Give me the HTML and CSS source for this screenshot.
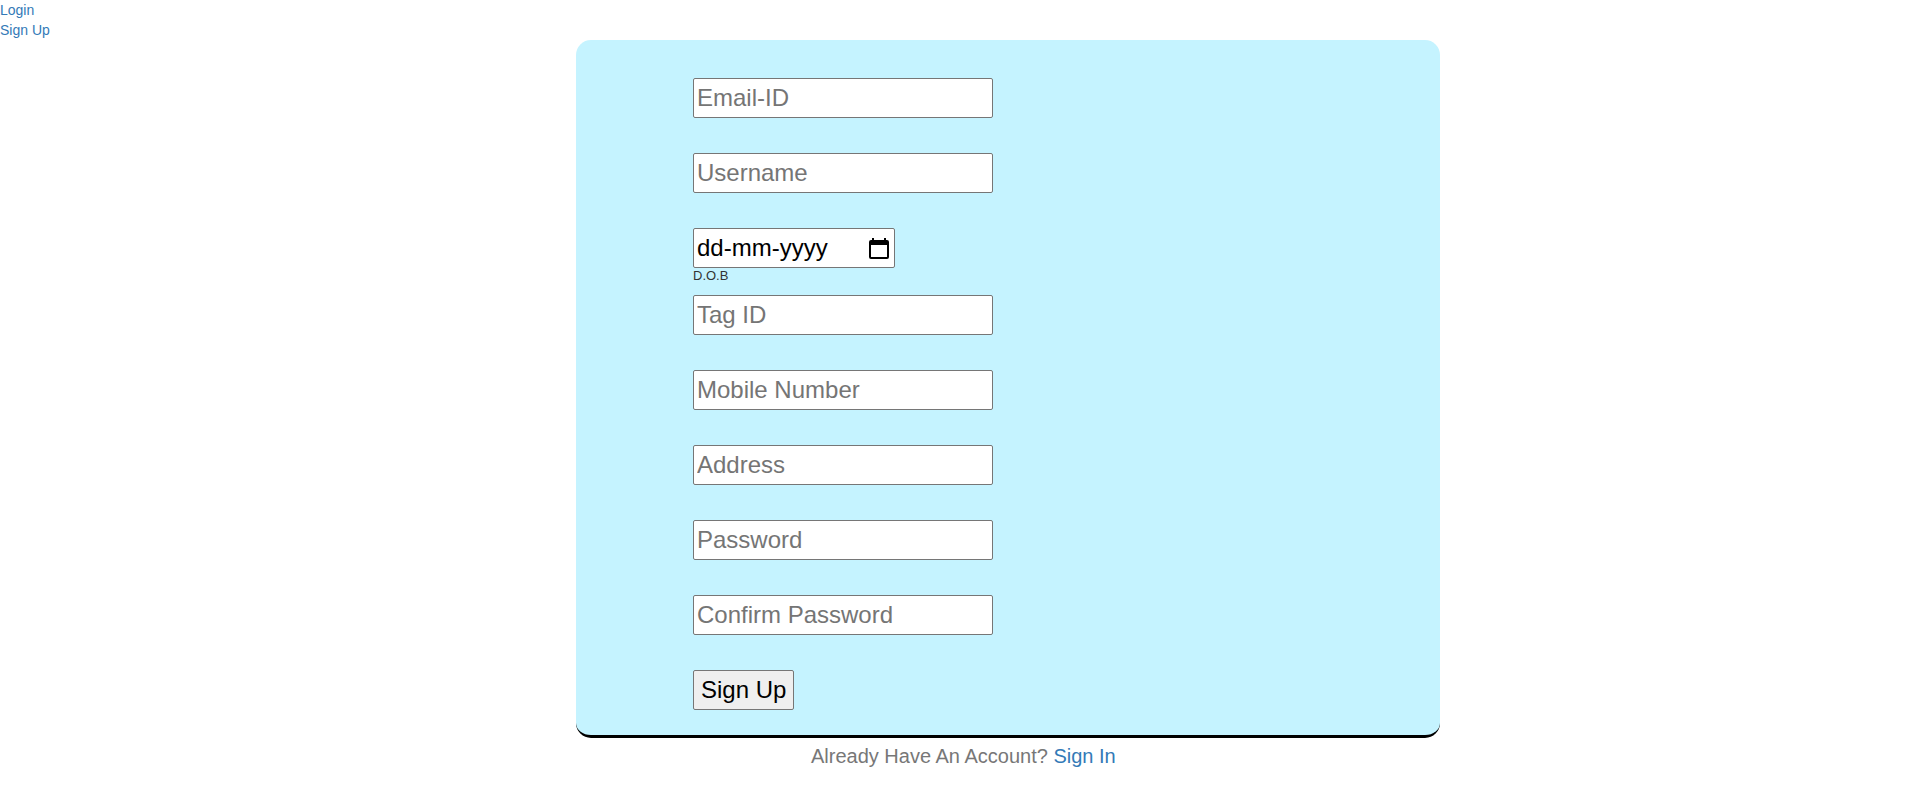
FILE: index.html
```html
<!DOCTYPE html>
<html lang="en">
<head>
<meta charset="utf-8">
<title>Sign Up</title>
<link rel="stylesheet" href="styles.css">
</head>
<body>
<nav class="nav">
  <a href="#login">Login</a>
  <a href="#signup">Sign Up</a>
</nav>
<main class="page">
  <form class="card">
    <input class="field" type="email" placeholder="Email-ID" aria-label="Email-ID">
    <input class="field" type="text" placeholder="Username" aria-label="Username">
    <div class="dob">
      <div class="date">
        <input class="date-text" id="dob" type="text" value="dd-mm-yyyy">
        <button class="date-button" type="button" aria-label="Choose date">
          <svg width="20" height="21" viewBox="0 0 20 21"><path fill="#000" fill-rule="evenodd" d="M3 0h2v2h10V0h2v2h1q2 0 2 2v15q0 2-2 2H2q-2 0-2-2V4q0-2 2-2h1zM2 7v12h16V7z"/></svg>
        </button>
      </div>
      <label class="dob-label" for="dob">D.O.B</label>
    </div>
    <input class="field" type="text" placeholder="Tag ID" aria-label="Tag ID">
    <input class="field" type="tel" placeholder="Mobile Number" aria-label="Mobile Number">
    <input class="field" type="text" placeholder="Address" aria-label="Address">
    <input class="field" type="password" placeholder="Password" aria-label="Password">
    <input class="field" type="password" placeholder="Confirm Password" aria-label="Confirm Password">
    <button class="submit" type="submit">Sign Up</button>
  </form>
  <p class="account">Already Have An Account? <a href="#signin">Sign In</a></p>
</main>
</body>
</html>
```
FILE: styles.css
```css
* { box-sizing: border-box; }
body {
  margin: 0;
  font-family: "Liberation Sans", Arial, sans-serif;
  font-size: 14px;
  line-height: 20px;
  color: #333;
  background: #fff;
}
a { color: #337ab7; text-decoration: none; }
.nav { display: flex; flex-direction: column; align-items: flex-start; }
.page { width: 45%; margin-left: 30%; }
.card {
  display: flex;
  flex-direction: column;
  align-items: flex-start;
  gap: 35px;
  padding: 38px 117px 25px;
  background: #c5f3ff;
  border-bottom: 3px solid #000;
  border-radius: 15px;
}
.field, .date, .submit {
  height: 40px;
  border: 1px solid #767676;
  border-radius: 2px;
  font: 24px "Liberation Sans", Arial, sans-serif;
}
.field { width: 300px; padding: 1px 3px; background: #fff; color: #000; }
.field::placeholder { color: #757575; }
.dob { margin-bottom: -24px; }
.date {
  display: flex;
  align-items: center;
  justify-content: space-between;
  width: 202px;
  padding: 0 5px 0 3px;
  background: #fff;
}
.date-text { width: 150px; padding: 0; border: 0; font: inherit; color: #000; }
.date-button { display: flex; padding: 0; border: 0; background: none; }
.dob-label { display: block; font-size: 13px; line-height: 16px; }
.submit { padding: 0 7px; background: #efefef; color: #000; }
.account { margin: 6px 0 0; padding-left: 235px; font-size: 20px; line-height: 24px; color: #777; }
```
